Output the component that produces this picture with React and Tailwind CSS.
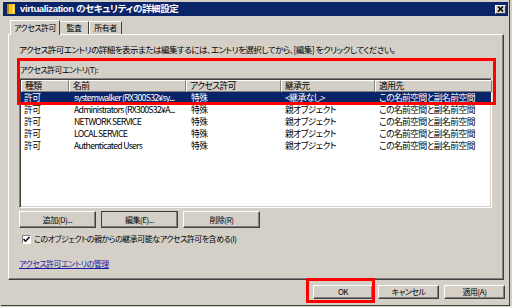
import React from "react";

const rows = [
  { type: "許可", name: "systemwalker (RX300S32¥sy...", perm: "特殊", from: "<継承なし>", to: "この名前空間と副名前空間", sel: true },
  { type: "許可", name: "Administrators (RX300S32¥A...", perm: "特殊", from: "親オブジェクト", to: "この名前空間と副名前空間" },
  { type: "許可", name: "NETWORK SERVICE", perm: "特殊", from: "親オブジェクト", to: "この名前空間と副名前空間" },
  { type: "許可", name: "LOCAL SERVICE", perm: "特殊", from: "親オブジェクト", to: "この名前空間と副名前空間" },
  { type: "許可", name: "Authenticated Users", perm: "特殊", from: "親オブジェクト", to: "この名前空間と副名前空間" },
];

const cols = [
  { label: "種類", w: "w-[48px]" },
  { label: "名前", w: "w-[117px]" },
  { label: "アクセス許可", w: "w-[95px]" },
  { label: "継承元", w: "w-[94px]" },
  { label: "適用先", w: "w-[117px]" },
];

// classic raised button
const Btn = ({ children, w, focused }) => (
  <div className={`${w} h-[17px] flex items-center justify-center bg-[#d4d0c8] border ${focused ? "border-[#404040]" : "border-t-white border-l-white border-r-[#404040] border-b-[#404040]"} shadow-[inset_-1px_-1px_0_#808080]`}>
    <span className="leading-none">{children}</span>
  </div>
);

export default function App() {
  return (
    <div className="w-[512px] h-[307px] bg-[#d4d0c8] overflow-hidden relative text-[8px] text-black font-['Noto_Sans_CJK_JP',sans-serif] [font-feature-settings:'palt'] tracking-[-0.5px]">
      <div className="ml-[1px] w-[509px] h-[306px] border-r border-b border-[#404040] flex flex-col">
        {/* title bar */}
        <div className="mt-[2px] ml-[2px] mr-[1px] h-[14px] bg-[#0a246a] flex items-center pl-[4px] pr-[2px]">
          <svg width="8" height="10" viewBox="0 0 8 10" className="shrink-0">
            <rect x="0" y="0" width="8" height="10" fill="#f4c430" />
            <rect x="0" y="0" width="2" height="10" fill="#c08a00" />
            <rect x="6" y="1" width="1" height="8" fill="#fff6c0" />
          </svg>
          <span className="ml-[5px] text-white font-bold text-[9.5px] font-['Liberation_Sans','Noto_Sans_CJK_JP',sans-serif] tracking-[-0.35px]">virtualization のセキュリティの詳細設定</span>
          <div className="ml-auto w-[11px] h-[9px] bg-[#d4d0c8] border border-t-white border-l-white border-r-[#404040] border-b-[#404040] flex items-center justify-center">
            <svg width="7" height="6" viewBox="0 0 7 6">
              <path d="M1 0.5 L6 5.5 M6 0.5 L1 5.5" stroke="#000" strokeWidth="1.6" />
            </svg>
          </div>
        </div>

        {/* tabs */}
        <div className="mt-[2px] ml-[7px] h-[16px] flex items-end">
          <div className="ml-[2px] h-[15px] w-[50px] flex items-center justify-center bg-[#d4d0c8] border-t border-l border-white border-r border-r-[#404040] relative z-10 -mb-[1px]">アクセス許可</div>
          <div className="h-[13px] w-[29px] flex items-center justify-center border-t border-white border-r border-r-[#404040]">監査</div>
          <div className="h-[13px] w-[33px] flex items-center justify-center border-t border-l border-white border-r border-r-[#404040]">所有者</div>
        </div>

        {/* panel */}
        <div className="ml-[7px] w-[496px] h-[246px] border border-t-white border-l-white border-r-[#404040] border-b-[#404040] shadow-[inset_-1px_-1px_0_#808080] pl-[10px] pr-[11px] flex flex-col">
          <div className="mt-[8px] h-[12px] leading-[12px] text-[8.5px]">アクセス許可エントリの詳細を表示または編集するには、エントリを選択してから、[編集] をクリックしてください。</div>
          <div className="mt-[9px] h-[12px] leading-[12px] ml-[1px]">アクセス許可エントリ(T):</div>

          {/* list */}
          <div className="mt-[2px] w-[473px] h-[130px] bg-white border border-t-[#808080] border-l-[#808080] border-r-white border-b-white shadow-[inset_1px_1px_0_#404040,inset_-1px_-1px_0_#d4d0c8] text-[8.75px] tracking-[-0.55px]">
            <div className="mt-[1px] ml-[1px] flex h-[12px]">
              {cols.map((c) => (
                <div key={c.label} className={`${c.w} shrink-0 h-[12px] bg-[#d4d0c8] border-t border-l border-white border-r border-r-[#808080] border-b border-b-[#808080] pl-[3px] leading-[10px]`}>
                  {c.label}
                </div>
              ))}
            </div>
            {rows.map((r, i) => (
              <div key={i} className={`ml-[1px] w-[470px] flex h-[12px] leading-[12px] ${r.sel ? "bg-[#0a246a] text-white" : ""}`}>
                <div className="w-[48px] shrink-0 pl-[3px]">{r.type}</div>
                <div className="w-[117px] shrink-0 pl-[5px] whitespace-nowrap overflow-hidden tracking-[-0.75px]">{r.name}</div>
                <div className="w-[95px] shrink-0 pl-[5px]">{r.perm}</div>
                <div className="w-[94px] shrink-0 pl-[4px]">{r.from}</div>
                <div className="w-[116px] shrink-0 pl-[4px] whitespace-nowrap">{r.to}</div>
              </div>
            ))}
          </div>

          {/* buttons */}
          <div className="mt-[3px] flex gap-[5px]">
            <Btn w="w-[77px]">追加(D)...</Btn>
            <Btn w="w-[77px]" focused>編集(E)...</Btn>
            <Btn w="w-[77px]">削除(R)</Btn>
          </div>

          <div className="mt-[6px] ml-[3px] flex items-center h-[10px]">
            <div className="w-[9px] h-[9px] bg-white border border-t-[#808080] border-l-[#808080] border-r-white border-b-white flex items-center justify-center">
              <svg width="7" height="7" viewBox="0 0 7 7">
                <path d="M0.5 3 L2.5 5.2 L6.5 1" stroke="#000" strokeWidth="1.5" fill="none" />
              </svg>
            </div>
            <span className="ml-[3px]">このオブジェクトの親からの継承可能なアクセス許可を含める(I)</span>
          </div>

          <div className="mt-[14px] h-[12px] leading-[12px] text-[#1a1aa0] underline">アクセス許可エントリの管理</div>
        </div>

        {/* dialog buttons */}
        <div className="mt-[5px] mr-[4px] flex justify-end gap-[5px]">
          <div className="w-[60px] h-[14px] flex items-center justify-center border border-t-white border-l-white border-r-[#404040] border-b-[#404040] shadow-[inset_-1px_-1px_0_#808080]">OK</div>
          <div className="w-[61px] h-[14px] flex items-center justify-center border border-t-white border-l-white border-r-[#404040] border-b-[#404040] shadow-[inset_-1px_-1px_0_#808080]">キャンセル</div>
          <div className="w-[61px] h-[14px] flex items-center justify-center border border-t-white border-l-white border-r-[#404040] border-b-[#404040] shadow-[inset_-1px_-1px_0_#808080]">適用(A)</div>
        </div>
      </div>

      {/* red annotation boxes */}
      <div className="absolute left-[17px] top-[58px] w-[479px] h-[47px] border-[3px] border-[#ff0000]" />
      <div className="absolute left-[306px] top-[278px] w-[69px] h-[25px] border-[3px] border-[#ff0000]" />
    </div>
  );
}
